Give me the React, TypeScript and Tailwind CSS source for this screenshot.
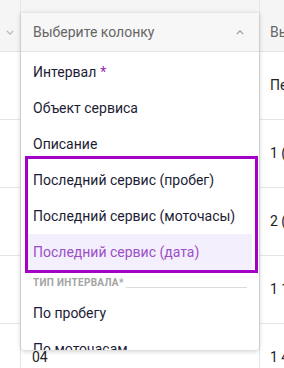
import React from 'react';

const rows = [
    { b: '', c: 'Пе' },
    { b: '', c: '1 (' },
    { b: '', c: '2 (' },
    { b: '', c: '1 1' },
    { b: '04', c: '1 4' },
];

const ChevronDown: React.FC<{ className?: string }> = ({ className }) => (
    <svg viewBox="0 0 10 6" className={className} fill="none" stroke="currentColor" strokeWidth="1.4">
        <path d="M1 1l4 4 4-4" />
    </svg>
);

const ChevronUp: React.FC<{ className?: string }> = ({ className }) => (
    <svg viewBox="0 0 10 6" className={className} fill="none" stroke="currentColor" strokeWidth="1.4">
        <path d="M1 5l4-4 4 4" />
    </svg>
);

const Item: React.FC<{ children: React.ReactNode; className?: string }> = ({ children, className }) => (
    <div className={`h-9 flex items-center pl-3 text-[14px] text-[#1d1c35] whitespace-nowrap ${className ?? ''}`}>{children}</div>
);

const App: React.FC = () => {
    return (
        <div className="relative w-[284px] h-[368px] overflow-hidden bg-white font-['Roboto',sans-serif]">
            {/* table behind */}
            <div className="flex flex-col">
                <div className="flex h-[52px] bg-[#f5f5f6] border-b border-[#e4e4e4]">
                    <div className="w-[21px] shrink-0 flex items-center justify-center pt-[13px] border-r border-[#e4e4e4] text-[#b5b5b5]">
                        <ChevronDown className="w-[8px] h-[5px]" />
                    </div>
                    <div className="w-[239px] shrink-0 border-r border-[#e4e4e4]" />
                    <div className="flex-1 flex items-center pl-[10px] pt-[13px] text-[14px] text-[#666] whitespace-nowrap overflow-hidden">Вы</div>
                </div>
                {rows.map((r, i) => (
                    <div key={i} className="flex h-[68px] border-b border-[#e6e6e6]">
                        <div className="w-[21px] shrink-0 border-r border-[#e4e4e4]" />
                        <div className="w-[239px] shrink-0 flex items-center pl-[11px] border-r border-[#e4e4e4] text-[14px] text-[#222]">{r.b}</div>
                        <div className="flex-1 flex items-center pl-[10px] text-[14px] text-[#222] whitespace-nowrap overflow-hidden">{r.c}</div>
                    </div>
                ))}
            </div>

            {/* dropdown */}
            <div className="absolute left-[21px] top-[13px] w-[238px] h-[337px] bg-white rounded-b-[4px] shadow-[0_1px_5px_rgba(0,0,0,0.22)] overflow-hidden flex flex-col">
                <div className="h-[39px] shrink-0 flex items-center justify-between pl-3 pr-[15px] bg-[#f7f7f7] border-b border-[#e2e2e2]">
                    <span className="text-[14px] text-[#666]">Выберите колонку</span>
                    <ChevronUp className="w-[8px] h-[5px] text-[#999]" />
                </div>
                <div className="pt-[2px] flex flex-col">
                    <Item>
                        Интервал <span className="ml-1 text-[#9c27b0]">*</span>
                    </Item>
                    <Item>Объект сервиса</Item>
                    <Item>Описание</Item>
                    <Item>Последний сервис (пробег)</Item>
                    <Item>Последний сервис (моточасы)</Item>
                    <Item className="mx-[7px] pl-[5px] text-[#9a4fc6] bg-[#f4effd]">Последний сервис (дата)</Item>
                    <div className="h-[25px] flex items-center gap-[2px] pl-3 pr-3">
                        <span className="text-[10px] font-bold tracking-[0.3px] text-[#a3a3a3] whitespace-nowrap">ТИП ИНТЕРВАЛА*</span>
                        <div className="flex-1 h-px bg-[#dcdcdc] mt-[10px]" />
                    </div>
                    <Item>По пробегу</Item>
                    <Item>По моточасам</Item>
                </div>

                {/* highlight frame */}
                <div className="absolute left-[4px] top-[143px] w-[233px] h-[117px] border-[3px] border-[#a300c8]" />
            </div>
        </div>
    );
};

export default App;
